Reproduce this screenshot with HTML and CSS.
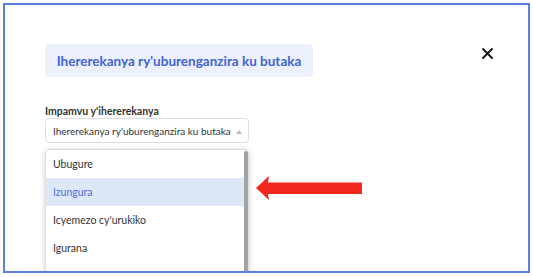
FILE: index.html
```html
<!DOCTYPE html>
<html lang="en">
<head>
    <meta charset="UTF-8">
    <meta name="viewport" content="width=device-width, initial-scale=1.0">
    <title>Ihererekanya ry'uburenganzira ku butaka</title>
    <link rel="stylesheet" href="styles.css">
</head>
<body>
    <div class="frame">
        <div class="header">
            <div class="chip">Ihererekanya ry'uburenganzira ku butaka</div>
            <button class="close" aria-label="Close">
                <svg width="11" height="11" viewBox="0 0 11 11">
                    <path d="M1 1 L10 10 M10 1 L1 10" stroke="#111" stroke-width="1.8" stroke-linecap="round"/>
                </svg>
            </button>
        </div>

        <label class="field-label" for="reason">Impamvu y'ihererekanya</label>
        <div class="select" id="reason">
            <span class="value">Ihererekanya ry'uburenganzira ku butaka</span>
            <span class="caret"></span>
        </div>

        <div class="dropdown">
            <ul class="options">
                <li>Ubugure</li>
                <li class="active">Izungura</li>
                <li>Icyemezo cy'urukiko</li>
                <li>Igurana</li>
            </ul>
            <div class="scrollbar"></div>
        </div>

        <svg class="pointer" width="106" height="24" viewBox="0 0 106 24">
            <polygon points="0,12 13,0 12,6.5 106,6.5 106,18 12,18 13,24" fill="#f4271f"/>
        </svg>
    </div>
</body>
</html>
```

FILE: styles.css
```css
body {
    margin: 0;
    padding: 3px;
    background-color: white;
    font-family: "Lato", "Open Sans", Arial, sans-serif;
    color: #333;
}
.frame {
    position: relative;
    box-sizing: border-box;
    width: 527px;
    height: 270px;
    border: 2px solid #5a7fdd;
    padding: 39px 35px 0 40px;
    overflow: hidden;
}
.header {
    display: flex;
    justify-content: space-between;
    align-items: flex-start;
}
.chip {
    width: 268px;
    height: 33px;
    box-sizing: border-box;
    display: flex;
    align-items: center;
    justify-content: center;
    background-color: #ecf1fd;
    color: #4463d3;
    font-weight: bold;
    font-size: 13.5px;
    border-radius: 4px;
}
.close {
    background: none;
    border: none;
    padding: 0;
    margin-top: 4px;
    width: 11px;
    height: 11px;
    display: flex;
    cursor: pointer;
}
.field-label {
    display: block;
    margin-top: 28px;
    margin-bottom: 1px;
    font-size: 10.5px;
    line-height: 12px;
    font-weight: bold;
    color: #333;
}
.select {
    box-sizing: border-box;
    width: 204px;
    height: 25px;
    border: 1px solid #ddd;
    border-radius: 4px;
    padding: 0 6px 0 7px;
    display: flex;
    align-items: center;
    justify-content: space-between;
    font-size: 10px;
    color: #333;
}
.value {
    white-space: nowrap;
}
.caret {
    flex-shrink: 0;
    width: 0;
    height: 0;
    margin-left: 3px;
    border-left: 3px solid transparent;
    border-right: 3px solid transparent;
    border-bottom: 4px solid #bbb;
    margin-top: 2px;
}
.dropdown {
    box-sizing: border-box;
    width: 204px;
    margin-top: 6px;
    display: flex;
    border: 1px solid #ddd;
    border-radius: 5px 5px 0 0;
    box-shadow: 0 1px 6px rgba(0, 0, 0, 0.18);
    background-color: white;
}
.options {
    list-style: none;
    margin: 0;
    padding: 0 0 30px 0;
    flex: 1;
}
.options li {
    height: 28px;
    display: flex;
    align-items: center;
    padding-left: 7px;
    font-size: 10.5px;
    color: #333;
}
.options li.active {
    background-color: #dde8f6;
    color: #4d6edc;
}
.scrollbar {
    width: 4px;
    margin: 1px 0 0 0;
    background-color: #a3a3a3;
    border-radius: 2px 2px 0 0;
}
.pointer {
    position: absolute;
    left: 251px;
    top: 171px;
}
```
